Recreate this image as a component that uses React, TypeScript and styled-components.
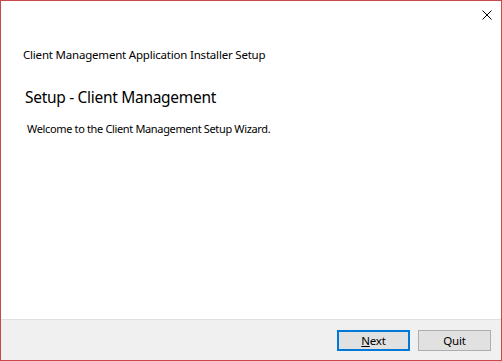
import styled, { createGlobalStyle } from "styled-components";

const GlobalStyle = createGlobalStyle`
  html, body {
    margin: 0;
    padding: 0;
    background: #ffffff;
  }
  * {
    box-sizing: border-box;
  }
`;

const Window = styled.div`
  width: 502px;
  height: 361px;
  border: 1px solid #c9494b;
  background: #ffffff;
  display: flex;
  flex-direction: column;
  font-family: "Noto Sans", "Open Sans", sans-serif;
  color: #000000;
`;

const TitleBar = styled.div`
  height: 30px;
  display: flex;
  justify-content: flex-end;
  align-items: flex-start;
  padding: 9px 9px 0 0;
`;

const CloseButton = styled.div`
  width: 10px;
  height: 10px;
  display: flex;
  cursor: default;
`;

const Body = styled.div`
  flex: 1;
  display: flex;
  flex-direction: column;
  padding: 16px 0 0 22px;
`;

const Caption = styled.div`
  font-size: 11.5px;
  letter-spacing: -0.2px;
  line-height: 16px;
`;

const Heading = styled.div`
  margin-top: 23px;
  margin-left: 2px;
  font-size: 15.5px;
  letter-spacing: -0.3px;
  line-height: 22px;
  color: #000000;
`;

const Welcome = styled.div`
  margin-top: 13px;
  margin-left: 4px;
  font-size: 11px;
  letter-spacing: -0.35px;
  line-height: 15px;
`;

const Footer = styled.div`
  height: 41px;
  border-top: 1px solid #dfdfdf;
  background: #f0f0f0;
  display: flex;
  justify-content: flex-end;
  align-items: flex-start;
  gap: 8px;
  padding: 10px 10px 0 0;
`;

const Button = styled.button<{ $default?: boolean }>`
  width: 73px;
  height: 21px;
  padding: 0;
  border: ${(p) => (p.$default ? "2px solid #0078d7" : "1px solid #adadad")};
  background: #e1e1e1;
  font-family: "Noto Sans", "Open Sans", sans-serif;
  font-size: 11.5px;
  letter-spacing: -0.2px;
  color: #000000;
  display: flex;
  align-items: center;
  justify-content: center;
  cursor: default;
`;

const Mnemonic = styled.span`
  text-decoration: underline;
`;

export default function App() {
  return (
    <>
      <GlobalStyle />
      <Window>
        <TitleBar>
          <CloseButton>
            <svg width="10" height="10" viewBox="0 0 10 10">
              <path d="M0.5 0.5 L9.5 9.5 M9.5 0.5 L0.5 9.5" stroke="#000" strokeWidth="1" />
            </svg>
          </CloseButton>
        </TitleBar>
        <Body>
          <Caption>Client Management Application Installer Setup</Caption>
          <Heading>Setup - Client Management</Heading>
          <Welcome>Welcome to the Client Management Setup Wizard.</Welcome>
        </Body>
        <Footer>
          <Button $default>
            <Mnemonic>N</Mnemonic>ext
          </Button>
          <Button>Quit</Button>
        </Footer>
      </Window>
    </>
  );
}
